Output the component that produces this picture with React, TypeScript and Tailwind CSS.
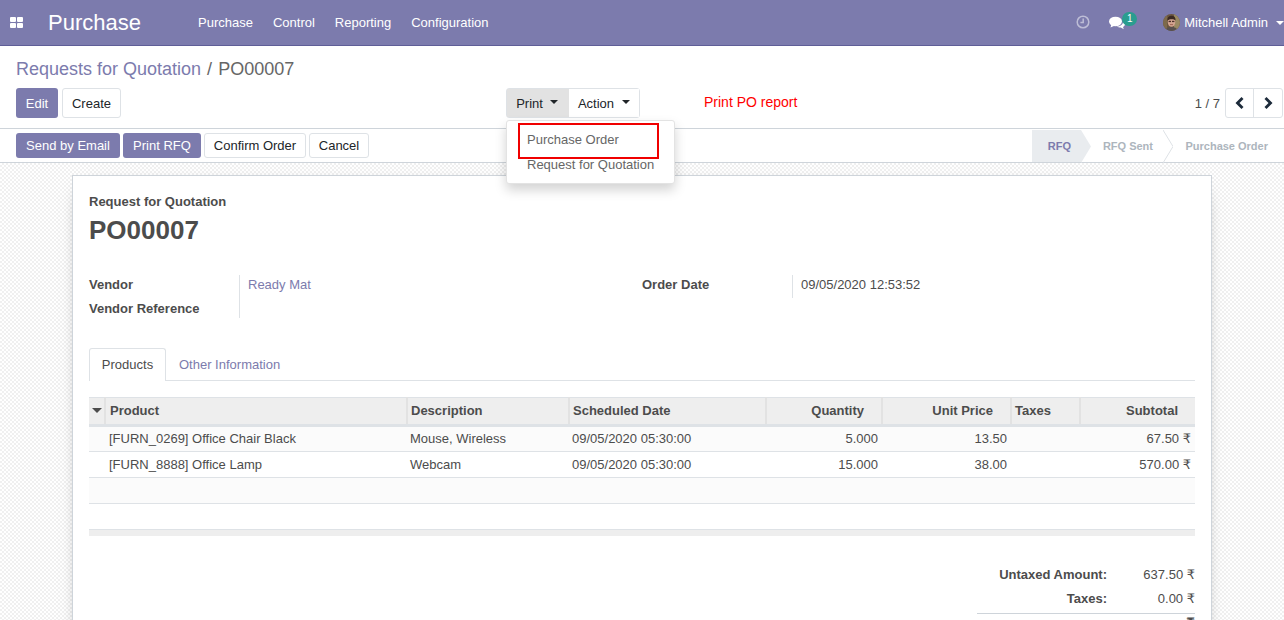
const font = { fontFamily: '"Liberation Sans", Arial, sans-serif' };

const Caret = ({ className = "" }: { className?: string }) => (
	<span
		className={`inline-block h-0 w-0 border-x-[4px] border-t-[4px] border-x-transparent ${className}`}
	/>
);

const Rupee = () => <span className="font-['DejaVu_Sans']">₹</span>;

const PrimaryButton = ({ label, className = "" }: { label: string; className?: string }) => (
	<button type="button" className={`rounded-[3px] bg-[#7C7BAD] text-white ${className}`}>
		{label}
	</button>
);

const WhiteButton = ({ label, className = "" }: { label: string; className?: string }) => (
	<button
		type="button"
		className={`rounded-[3px] border border-[#dee2e6] bg-white text-[#212529] ${className}`}
	>
		{label}
	</button>
);

const AppsIcon = () => (
	<svg width="13" height="11" viewBox="0 0 13 11" fill="#fff">
		<rect x="0" y="0" width="6" height="5" rx="1" />
		<rect x="7" y="0" width="6" height="5" rx="1" />
		<rect x="0" y="6" width="6" height="5" rx="1" />
		<rect x="7" y="6" width="6" height="5" rx="1" />
	</svg>
);

const ClockIcon = () => (
	<svg width="14" height="14" viewBox="0 0 14 14" fill="none" stroke="#bdbdd6" strokeWidth="1.5" className="-mt-[1px]">
		<circle cx="7" cy="7" r="5.8" />
		<path d="M7.2 3.5V7.4H4.4" />
	</svg>
);

const ChatIcon = () => (
	<svg width="16" height="14" viewBox="0 0 16 14" fill="#fff">
		<ellipse cx="6.5" cy="5.5" rx="6.5" ry="4.8" />
		<path d="M2.5 8 1.5 11.5 6 9.5Z" />
		<path d="M14 5.500c1.400.8 2 1.800 2 2.800 0 1.200-.8 2.100-2 2.800l.8 2.200-3-1.800c-1.300 0-3-.2-4-1 3 0 6.400-1.600 6.200-5Z" />
	</svg>
);

const Avatar = () => (
	<svg width="17" height="17" viewBox="0 0 17 17" className="rounded-full">
		<rect width="17" height="17" fill="#6b5640" />
		<rect x="11" width="6" height="17" fill="#9a8a63" />
		<rect width="4" height="17" fill="#7d6a4c" />
		<ellipse cx="8.5" cy="8" rx="3.8" ry="4.8" fill="#d2a48f" />
		<path d="M4.500 6.500C4.300 2.800 6.500 1.800 8.600 1.800s4.200 1.200 3.900 4.700C11 4.900 6.500 4.900 4.500 6.500Z" fill="#3a2a22" />
		<path d="M2.500 17c.4-3.200 3-4 6-4s5.600.8 6 4Z" fill="#57504f" />
		<rect x="5.600" y="6.800" width="2.400" height="1.300" fill="#4a2f28" />
		<rect x="9" y="6.800" width="2.400" height="1.300" fill="#4a2f28" />
		<rect x="7" y="10.200" width="3" height="0.900" fill="#9c5f52" />
	</svg>
);

const PagerArrow = ({ d }: { d: string }) => (
	<svg width="9" height="12" viewBox="0 0 9 12" fill="#1c2a3a">
		<path d={d} />
	</svg>
);

const Navbar = () => (
	<nav className="flex h-[46px] items-center border-b border-[#5f5e97] bg-[#7C7BAD] text-white">
		<div className="ml-[10px] flex w-[38px] items-center">
			<AppsIcon />
		</div>
		<span className="w-[150px] text-[22px] leading-none">Purchase</span>
		<div className="flex gap-[20px] text-[13px]">
			<span>Purchase</span>
			<span>Control</span>
			<span>Reporting</span>
			<span>Configuration</span>
		</div>
		<div className="ml-auto flex items-center">
			<ClockIcon />
			<div className="relative ml-[19px] mr-[38px] flex">
				<ChatIcon />
				<span className="absolute -top-[4px] left-[13px] flex h-[14px] w-[15px] items-center justify-center rounded-full bg-[#2a9d8f] text-[10px] leading-none text-white">
					1
				</span>
			</div>
			<Avatar />
			<span className="ml-[4px] text-[13px]">Mitchell Admin</span>
			<Caret className="ml-[8px] border-t-white" />
		</div>
	</nav>
);

const ControlPanel = () => (
	<div className="border-b border-[#ced4da] bg-white pl-[16px] pr-[1px] pt-[12px]">
		<div className="flex h-[22px] items-center text-[18px] leading-none text-[#666]">
			<span className="text-[#7C7BAD]">Requests for Quotation</span>
			<span className="mx-[6px]">/</span>
			<span>PO00007</span>
		</div>
		<div className="mt-[8px] flex h-[40px] items-start text-[13px]">
			<div className="flex w-[490px] gap-[4px]">
				<PrimaryButton label="Edit" className="h-[30px] w-[42px] pt-[1px]" />
				<WhiteButton label="Create" className="h-[30px] w-[59px] pt-[1px]" />
			</div>
			<div className="relative flex h-[30px] rounded-[3px] border border-[#dee2e6] text-[#212529]">
				<button type="button" className="flex w-[62px] items-center justify-center gap-[7px] bg-[#e2e2e2] pr-[2px] pt-[1px]">
					Print
					<Caret className="-mt-[3px] border-t-[#212529]" />
				</button>
				<button type="button" className="flex w-[70px] items-center justify-center gap-[8px] bg-white pt-[1px]">
					Action
					<Caret className="-mt-[3px] border-t-[#212529]" />
				</button>
				<div className="absolute left-[-1px] top-[31px] z-10 h-[64px] w-[169px] rounded-[3px] border border-[#e3e3e3] bg-white pl-[20px] pt-[6px] text-[#666] shadow-[0_6px_12px_rgba(0,0,0,0.175)]">
					<div className="leading-[25px]">Purchase Order</div>
					<div className="leading-[25px]">Request for Quotation</div>
					<div className="absolute left-[11px] top-[2px] h-[36px] w-[141px] border-2 border-[#f00000]" />
				</div>
			</div>
			<span className="ml-[64px] text-[14px] leading-[28px] text-[#f00]">Print PO report</span>
			<div className="ml-auto flex items-center">
				<span className="mr-[5px] pt-[1px] text-[#4c4c4c]">1 / 7</span>
				<div className="flex h-[30px] rounded-[3px] border border-[#dee2e6]">
					<button type="button" className="flex w-[28px] items-center justify-center border-r border-[#dee2e6]">
						<PagerArrow d="M6.500 0 8.500 2 4.500 6 8.500 10 6.500 12 .5 6Z" />
					</button>
					<button type="button" className="flex w-[28px] items-center justify-center">
						<PagerArrow d="M2.500 0 .5 2 4.500 6 .5 10 2.500 12 8.500 6Z" />
					</button>
				</div>
			</div>
		</div>
	</div>
);

const StatusBar = () => (
	<div className="flex h-[34px] items-center justify-between border-b border-[#ced4da] bg-white pl-[16px] text-[13px]">
		<div className="flex gap-[3px]">
			<PrimaryButton label="Send by Email" className="h-[25px] w-[104px]" />
			<PrimaryButton label="Print RFQ" className="h-[25px] w-[78px]" />
			<WhiteButton label="Confirm Order" className="h-[25px] w-[102px]" />
			<WhiteButton label="Cancel" className="h-[25px] w-[60px]" />
		</div>
		<div className="flex h-full items-stretch pt-[1px] text-[11px] font-bold">
			<div className="relative flex w-[49px] items-center justify-end bg-[#e9ecef] pr-[10px] text-[#7C7BAD]">
				RFQ
				<svg width="10" height="33" viewBox="0 0 10 33" className="absolute left-[100%] top-0">
					<path d="M0 0 10 16.500 0 33Z" fill="#e9ecef" />
				</svg>
			</div>
			<div className="relative flex w-[82px] items-center justify-end pr-[10px] text-[#adb5bd]">
				RFQ Sent
				<svg width="10" height="33" viewBox="0 0 10 33" className="absolute left-[100%] top-0">
					<path d="M0 0 10 16.500 0 33" fill="none" stroke="#dee2e6" />
				</svg>
			</div>
			<div className="flex w-[121px] items-center justify-end pr-[16px] text-[#adb5bd]">Purchase Order</div>
		</div>
	</div>
);

const headCell = "border-l-2 border-[#e2e2e2] px-[3px] font-bold";

const LineRow = ({ cells, bg = "" }: { cells: React.ReactNode[]; bg?: string }) => (
	<tr className={`h-[26px] border-b border-[#dee2e6] ${bg}`}>
		<td />
		<td className="pl-[4px] pr-[3px]">{cells[0]}</td>
		<td className="px-[3px]">{cells[1]}</td>
		<td className="px-[3px]">{cells[2]}</td>
		<td className="px-[4px] text-right">{cells[3]}</td>
		<td className="px-[4px] text-right">{cells[4]}</td>
		<td />
		<td className="px-[4px] text-right">{cells[5]}</td>
	</tr>
);

const LinesTable = () => (
	<table className="mt-[16px] w-full table-fixed border-collapse text-[13px] text-[#4c4c4c]">
		<colgroup>
			<col className="w-[16px]" />
			<col className="w-[302px]" />
			<col className="w-[162px]" />
			<col className="w-[197px]" />
			<col className="w-[116px]" />
			<col className="w-[129px]" />
			<col className="w-[69px]" />
			<col />
		</colgroup>
		<thead>
			<tr className="h-[28px] border-y-[1px] border-b-[3px] border-t-[#dee2e6] border-b-[#dee2e6] bg-[#eeeeee]">
				<th className="pl-[1px] font-bold">
					<Caret className="mb-[2px] border-x-[5px] border-t-[5px] border-t-[#4c4c4c]" />
				</th>
				<th className={`${headCell} pl-[4px] text-left`}>Product</th>
				<th className={`${headCell} text-left`}>Description</th>
				<th className={`${headCell} text-left`}>Scheduled Date</th>
				<th className={`${headCell} pr-[17px] text-right`}>Quantity</th>
				<th className={`${headCell} pr-[17px] text-right`}>Unit Price</th>
				<th className={`${headCell} text-left`}>Taxes</th>
				<th className={`${headCell} pr-[17px] text-right`}>Subtotal</th>
			</tr>
		</thead>
		<tbody>
			<LineRow
				bg="bg-[#fbfbfb]"
				cells={["[FURN_0269] Office Chair Black", "Mouse, Wireless", "09/05/2020 05:30:00", "5.000", "13.50", <>67.50 <Rupee /></>]}
			/>
			<LineRow
				cells={["[FURN_8888] Office Lamp", "Webcam", "09/05/2020 05:30:00", "15.000", "38.00", <>570.00 <Rupee /></>]}
			/>
			<LineRow bg="bg-[#fbfbfb]" cells={["", "", "", "", "", ""]} />
			<LineRow cells={["", "", "", "", "", ""]} />
		</tbody>
		<tfoot>
			<tr className="h-[6px] bg-[#eeeeee]">
				<td colSpan={8} />
			</tr>
		</tfoot>
	</table>
);

const Sheet = () => (
	<div className="mx-[72px] mt-[12px] h-[600px] border border-[#ced4da] bg-white px-[16px] pt-[18px] text-[13px] text-[#4c4c4c] shadow-[0_5px_20px_-15px_#000]">
		<div className="font-bold leading-[15px]">Request for Quotation</div>
		<h1 className="mt-[3px] text-[26px] font-bold leading-[36px]">PO00007</h1>
		<div className="mt-[27px] flex">
			<div className="flex w-[553px]">
				<div className="h-[43px] w-[151px] border-r border-[#dee2e6] pt-[1px] font-bold leading-[18px]">
					<div>Vendor</div>
					<div className="mt-[6px]">Vendor Reference</div>
				</div>
				<div className="pl-[8px] pt-[1px] leading-[18px] text-[#7C7BAD]">Ready Mat</div>
			</div>
			<div className="flex h-[23px]">
				<div className="w-[151px] border-r border-[#dee2e6] pt-[1px] font-bold leading-[18px]">Order Date</div>
				<div className="pl-[8px] pt-[1px] leading-[18px]">09/05/2020 12:53:52</div>
			</div>
		</div>
		<div className="mt-[30px] flex h-[33px] border-b border-[#dee2e6]">
			<div className="flex h-[33px] w-[77px] items-center justify-center rounded-t-[3px] border border-b-0 border-[#dee2e6] bg-white">
				Products
			</div>
			<div className="flex h-[33px] items-center pl-[13px] text-[#7C7BAD]">Other Information</div>
		</div>
		<LinesTable />
		<div className="ml-auto mt-[26px] w-[218px]">
			<div className="flex h-[24px] items-center justify-end pt-[2px]">
				<span className="font-bold">Untaxed Amount:</span>
				<span className="w-[88px] text-right">637.50 <Rupee /></span>
			</div>
			<div className="flex h-[24px] items-center justify-end pt-[2px]">
				<span className="font-bold">Taxes:</span>
				<span className="w-[88px] text-right">0.00 <Rupee /></span>
			</div>
			<div className="mt-[3px] border-t border-[#ced4da]" />
			<div className="h-[18px] text-right font-bold leading-[18px]"><Rupee /></div>
		</div>
	</div>
);

export default function App() {
	return (
		<div style={font} className="flex h-[620px] w-[1284px] flex-col overflow-hidden bg-white">
			<Navbar />
			<ControlPanel />
			<StatusBar />
			<div className="min-h-0 flex-1 bg-[repeating-conic-gradient(#f0f0f0_0_25%,#ffffff_0_50%)] bg-[length:4px_4px]">
				<Sheet />
			</div>
		</div>
	);
}
